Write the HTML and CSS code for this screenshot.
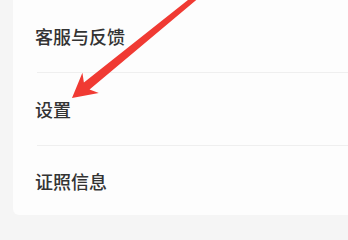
FILE: index.html
```html
<!DOCTYPE html>
<html lang="zh">
<head>
<meta charset="utf-8">
<link rel="stylesheet" href="styles.css">
</head>
<body>
<div class="page">
  <div class="card">
    <div class="row">客服与反馈</div>
    <div class="divider"></div>
    <div class="row">设置</div>
    <div class="divider"></div>
    <div class="row last">证照信息</div>
  </div>
  <svg class="arrow" width="348" height="230" viewBox="0 0 348 230">
    <polygon fill="#f03a33" points="201.5,-4.4 198.3,-8.2 83.9,82.5 82.4,72.75 72,98 98.8,92.9 89.55,89.5"/>
  </svg>
</div>
</body>
</html>
```
FILE: styles.css
```css
html, body {
  margin: 0;
  padding: 0;
}
body {
  background: #f5f5f5;
  width: 348px;
  height: 230px;
  overflow: hidden;
  font-family: "Noto Sans CJK SC", "Noto Sans", sans-serif;
}
.page {
  position: relative;
  width: 348px;
  height: 230px;
}
.card {
  margin-left: 13px;
  background: #fdfdfd;
  border-radius: 0 0 0 6px;
  display: flex;
  flex-direction: column;
}
.row {
  height: 72px;
  display: flex;
  align-items: center;
  padding-left: 22px;
  font-size: 18px;
  font-weight: 500;
  color: #333333;
  line-height: 1;
}
.row.last {
  height: 69px;
}
.divider {
  height: 1px;
  margin-left: 24px;
  background: #efefef;
}
.arrow {
  position: absolute;
  left: 0;
  top: 0;
}
```
